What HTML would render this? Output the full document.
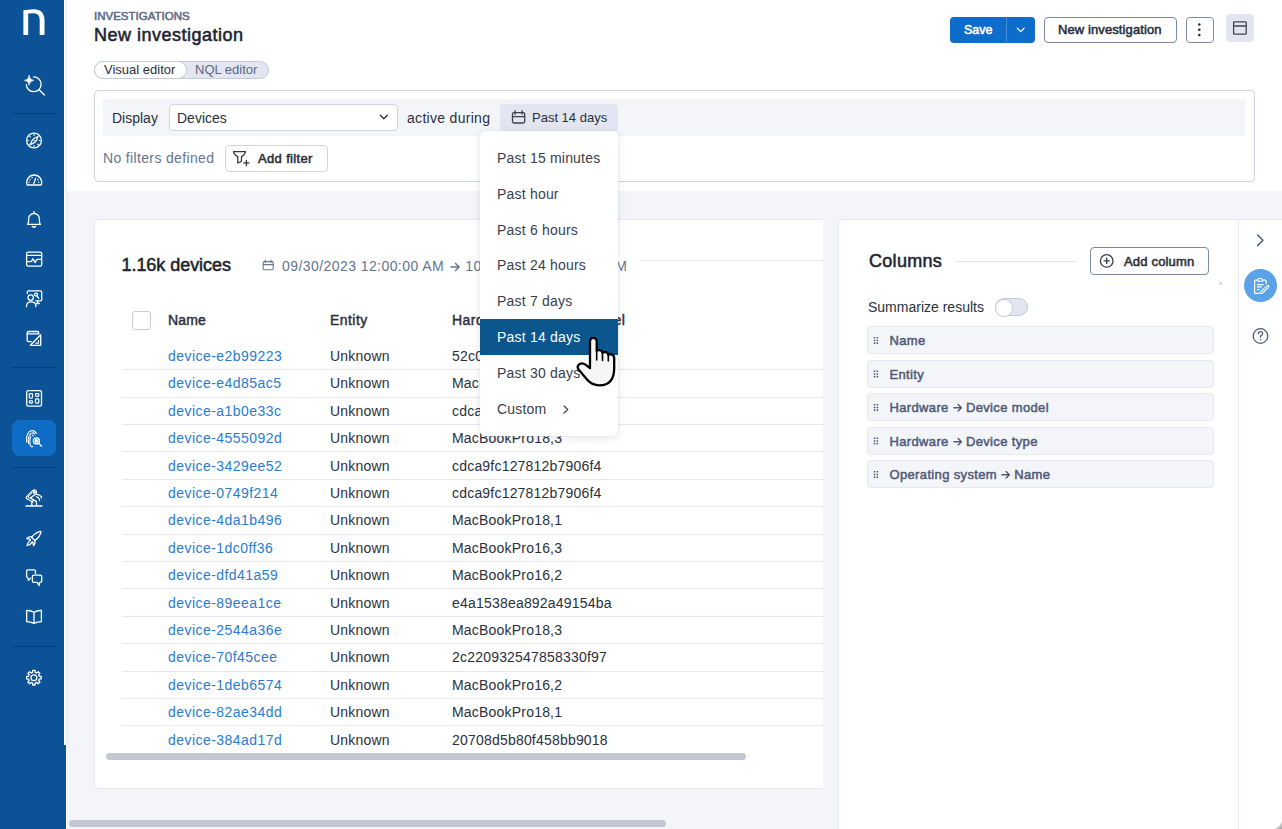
<!DOCTYPE html>
<html><head><meta charset="utf-8">
<style>
*{box-sizing:border-box;margin:0;padding:0}
html,body{width:1282px;height:829px;overflow:hidden;background:#fff;font-family:"Liberation Sans",sans-serif;color:#1f2633}
.a{position:absolute}
.t{position:absolute;line-height:1;white-space:nowrap}
#sb{left:0;top:0;width:64px;height:829px;background:#0b5297}
.sdiv{position:absolute;left:12px;width:44px;height:1px;background:#073f7c}
.ic{position:absolute;left:24px;width:20px;height:20px}
#gray{left:67px;top:191px;width:1215px;height:638px;background:#f4f5f9}
.btn{position:absolute;border:1px solid #7d8aa6;border-radius:4px;background:#fff}
.row{position:absolute;left:122px;width:701px;height:1px;background:#e6e8f1}
.lnk{color:#2b7bd0;letter-spacing:.45px}
.cell{color:#2b303b;letter-spacing:.2px}
.colitem{position:absolute;left:867px;width:347px;height:28px;background:#f4f5f9;border:1px solid #e5e8f0;border-radius:4px}
.colitem .t{left:21.5px;top:6.5px;font-size:13px;font-weight:400;-webkit-text-stroke:.5px currentColor;letter-spacing:.35px;color:#4f5b78}
.grip{position:absolute;left:6px;top:10px;width:5px;height:8px}
.arr{display:inline-block;width:.72em;height:.72em;vertical-align:-.06em;margin:0;stroke-width:1.5}
.dd{color:#3a404c;font-size:14px;letter-spacing:.2px}
</style></head>
<body>
<!-- sidebar -->
<div id="sb" class="a"></div>
<div class="sdiv" style="top:113px"></div><div class="sdiv" style="top:367px"></div><div class="sdiv" style="top:467px"></div><div class="sdiv" style="top:646px"></div>
<div class="a" style="left:12px;top:420px;width:44px;height:36px;background:#0f6cc5;border-radius:8px"></div>
<!--SBSVG-->
<svg class="a" style="left:0;top:0" width="64" height="829" viewBox="0 0 64 829" fill="none" stroke="#fff" stroke-width="1.3" stroke-linecap="round" stroke-linejoin="round">
<path d="M23.4 35.1V10.3L33.5 9.2Q39 9.2 41.8 12Q44.5 15 44.5 20.5V35.1H39.7V20Q39.7 13.2 33.8 13.2L28.2 13.5V35.1Z" fill="#fff" stroke="none"/>
<path d="M33.7 76.9A7.4 7.4 0 1 1 26.3 84.6"/><path d="M39.1 89.7L44.4 95"/>
<path d="M29.1 75.3Q29.5 79.7 33.9 80.3Q29.5 80.9 29.1 85.2Q28.7 80.9 24.4 80.3Q28.7 79.7 29.1 75.3Z" fill="#fff" stroke-width=".6"/>
<circle cx="34" cy="140.5" r="7.4"/>
<path d="M34 134.6v.8M34 145.6v.8M27.9 140.5h.8M39.3 140.5h.8M29.7 136.2l.6.6M37.7 144.2l.6.6M38.3 136.2l-.6.6M30.3 144.8l-.6-.6" stroke-width="1.1"/>
<path d="M30.7 144.3Q31.3 138.6 37.6 136.9Q37 142.6 30.7 144.3Z" stroke-width="1.2"/>
<circle cx="34.2" cy="140.6" r=".6" fill="#fff" stroke="none"/>
<path d="M27.2 185A7.45 7.45 0 1 1 41.2 185Z"/>
<circle cx="32.1" cy="177.7" r=".7" fill="#fff" stroke="none"/><circle cx="30.1" cy="179.7" r=".7" fill="#fff" stroke="none"/><circle cx="29" cy="182.3" r=".7" fill="#fff" stroke="none"/><circle cx="37.8" cy="179.7" r=".7" fill="#fff" stroke="none"/><circle cx="38.6" cy="182.3" r=".7" fill="#fff" stroke="none"/>
<path d="M33.6 184.2L35.6 178.2" stroke-width="1.2"/>
<path d="M27.6 224.4H40.4Q39.5 223.4 39.4 221V218.9A5.4 5.4 0 0 0 28.6 218.9V221Q28.5 223.4 27.6 224.4Z"/><path d="M34 211.6V213.4"/><path d="M32.3 226.3Q34 228.2 35.7 226.3"/>
<rect x="26.6" y="252.2" width="15.1" height="13.9" rx="1.6"/><path d="M26.6 255.3H41.7"/>
<path d="M26.8 261.6H30.5Q31.4 261.6 31.9 260.6L32.9 258.8L35.2 262.6L36.3 260.2Q36.7 259.4 37.6 259.4H41.5"/>
<path d="M27.3 293.4V292.3Q27.3 290.9 28.7 290.9H40.3Q41.7 290.9 41.7 292.3V299.4Q41.7 300.8 40.3 300.8H35.8"/><path d="M37.7 300.9V303.3M36.2 303.5H39.3"/>
<circle cx="30.7" cy="297.6" r="2.7"/><path d="M26.4 306.6Q26.6 301.9 31.2 301.9Q35.8 301.9 36 306.6"/>
<circle cx="36.1" cy="294.6" r="1.5"/><path d="M37 295.9L38.7 298.4"/>
<path d="M31.3 341.6H28.6Q27.2 341.6 27.2 340.2V332.9Q27.2 331.5 28.6 331.5H37.4Q38.8 331.5 38.8 332.9V333.8"/><path d="M27.2 333.9H38.4"/>
<path d="M30.4 345.3L40.7 334.8V345.3Z"/><path d="M35.8 343.1H38.5V340.2" stroke-width="1.1"/>
<rect x="26.7" y="390.7" width="14.8" height="15.4" rx="1.6"/>
<rect x="29.3" y="393.7" width="3.2" height="4.4" rx=".8" stroke-width="1.2"/><rect x="35.5" y="393.7" width="3.3" height="2.6" rx=".8" stroke-width="1.2"/><rect x="29.3" y="400.8" width="3.2" height="2.3" rx=".8" stroke-width="1.2"/><rect x="35.5" y="398.9" width="3.3" height="4.2" rx=".8" stroke-width="1.2"/>
<path d="M26.6 442Q26 433 30.5 431Q34.2 429.6 36.4 433.4" stroke-width="1.1"/>
<path d="M28.4 443.5Q27.8 436 31 433.3Q33.4 432.2 34.8 434.2" stroke-width="1.1" stroke-dasharray="3 1"/>
<path d="M30.3 445.5Q29.2 440 30.6 436.8M32.2 435.3Q33 435.1 33.2 436" stroke-width="1.1"/>
<path d="M30.9 446.3Q32 447 32.6 446.5" stroke-width="1.1"/>
<circle cx="36.4" cy="440.9" r="3"/><circle cx="36.4" cy="440.9" r="1.9" fill="#fff" stroke="none"/><path d="M38.6 443.1L41.5 446.2"/>
<path d="M26.1 506H41.9" stroke-width="1.5"/>
<path d="M31.8 505.6V502.8A2.35 2.35 0 0 1 36.5 502.8V505.6"/>
<path d="M32.9 502L27.3 499Q25.6 497.9 26.9 496.4L32.4 490.9Q34.3 489.1 36 490.7Q37.4 492.3 36 494L30.3 497.9L33.9 500"/>
<path d="M28.6 497.6L29.6 498.2M28.4 496.6L29.4 495.6M30.6 494.4L31.6 493.4" stroke-width="1"/>
<circle cx="34.2" cy="492.3" r="1"/>
<path d="M36.6 494.4Q39.6 494.6 41.3 496.7Q41.8 497.4 41.2 497.9M36.4 496.6Q38.6 497.4 39.6 499.6Q39.9 500.3 39.3 500.6" stroke-width="1.2"/>
<path d="M41 531.3Q36 531.8 31.6 537.2L34.9 540.6Q40.4 536.2 41 531.3Z"/>
<path d="M31.9 537Q28.2 536.2 26.8 538.5L30.3 539.4"/><path d="M34.7 540.4Q35.5 544 33.6 545.5L32.6 542"/>
<path d="M30.4 540.2Q27.6 542.3 27 545.6Q30.6 545 32.3 541.9"/>
<path d="M35.5 573.4V571.2Q35.5 569.8 34.1 569.8H28Q26.6 569.8 26.6 571.2V576.2Q26.6 577.6 27.8 577.7L28.4 580.3L30.5 578.3"/>
<path d="M33.8 575.2H40.3Q41.7 575.2 41.7 576.6V581Q41.7 582.4 40.3 582.4H39.6L39.2 585.5L37 582.4H33.8Q32.4 582.4 32.4 581V576.6Q32.4 575.2 33.8 575.2Z"/>
<path d="M34 612.2Q31 610.5 27.8 610.5H26.7V621.7Q30.7 621.7 34 623.4Q37.3 621.7 41.4 621.7V610.5H40.2Q37 610.5 34 612.2V623.2"/>
<path d="M32.57 672.36 L32.69 670.40 L35.11 670.40 L35.23 672.36 L36.74 672.99 L38.20 671.68 L39.92 673.40 L38.61 674.86 L39.24 676.37 L41.20 676.49 L41.20 678.91 L39.24 679.03 L38.61 680.54 L39.92 682.00 L38.20 683.72 L36.74 682.41 L35.23 683.04 L35.11 685.00 L32.69 685.00 L32.57 683.04 L31.06 682.41 L29.60 683.72 L27.88 682.00 L29.19 680.54 L28.56 679.03 L26.60 678.91 L26.60 676.49 L28.56 676.37 L29.19 674.86 L27.88 673.40 L29.60 671.68 L31.06 672.99Z"/>
<circle cx="33.9" cy="677.7" r="2.9"/>
</svg>
<!--/SBSVG-->
<div class="a" style="left:64px;top:745px;width:2px;height:84px;background:#0b5297"></div>
<div class="a" style="left:66px;top:0;width:1px;height:745px;background:#e3e8f0"></div>

<!-- gray content bg -->
<div id="gray" class="a"></div>

<!-- header -->
<div class="t" style="left:94px;top:11px;font-size:11.5px;font-weight:400;-webkit-text-stroke:.55px currentColor;color:#5f6b85">INVESTIGATIONS</div>
<div class="t" style="left:94px;top:26px;font-size:18px;font-weight:400;-webkit-text-stroke:.55px currentColor;letter-spacing:.5px;color:#1d2430">New investigation</div>

<!-- editor toggle -->
<div class="a" style="left:94px;top:61px;width:175px;height:18px;border:1px solid #c5cad8;border-radius:9px;background:#e3e6f1"></div>
<div class="a" style="left:94px;top:61px;width:93px;height:18px;border:1px solid #c5cad8;border-radius:9px;background:#fff"></div>
<div class="t" style="left:104px;top:63px;font-size:13px;color:#2b303b">Visual editor</div>
<div class="t" style="left:195px;top:63px;font-size:13px;color:#5b6782">NQL editor</div>

<!-- buttons top right -->
<div class="a" style="left:950px;top:17px;width:85px;height:26px;background:#0e6cca;border-radius:4px"></div>
<div class="a" style="left:1006px;top:17px;width:1px;height:26px;background:#4a8fd6"></div>
<div class="t" style="left:964px;top:23.5px;font-size:12.5px;font-weight:400;-webkit-text-stroke:.55px currentColor;color:#fff">Save</div>
<div class="btn" style="left:1044px;top:17px;width:133px;height:26px"></div>
<div class="t" style="left:1058px;top:23px;font-size:13px;font-weight:400;-webkit-text-stroke:.55px currentColor;letter-spacing:.1px;color:#2b303b">New investigation</div>
<div class="btn" style="left:1186px;top:17px;width:28px;height:26px"></div>
<div class="a" style="left:1226px;top:14px;width:28px;height:28px;background:#e3e6f1;border-radius:4px"></div>

<!-- query box -->
<div class="a" style="left:94px;top:90px;width:1161px;height:92px;border:1px solid #cfd4e0;border-radius:4px"></div>
<div class="a" style="left:103px;top:99px;width:1142px;height:37px;background:#f4f5f9"></div>
<div class="t" style="left:112px;top:111px;font-size:14px;color:#2b303b">Display</div>
<div class="a" style="left:169px;top:104px;width:229px;height:27px;background:#fff;border:1px solid #cfd4e0;border-radius:4px"></div>
<div class="t" style="left:177px;top:111px;font-size:14px;color:#2b303b">Devices</div>
<div class="t" style="left:407px;top:111px;font-size:14px;letter-spacing:.3px;color:#2b303b">active during</div>
<div class="a" style="left:500px;top:104px;width:118px;height:27px;background:#e3e6f1;border-radius:4px"></div>
<div class="t" style="left:532px;top:111px;font-size:13px;color:#2b303b">Past 14 days</div>
<div class="t" style="left:103px;top:151px;font-size:14px;letter-spacing:.35px;color:#66748f">No filters defined</div>
<div class="btn" style="left:225px;top:145px;width:103px;height:27px;border-color:#cfd4e0"></div>
<div class="t" style="left:258px;top:152px;font-size:13px;font-weight:400;-webkit-text-stroke:.55px currentColor;letter-spacing:.35px;color:#2b303b">Add filter</div>

<!-- table card -->
<div class="a" style="left:94px;top:219px;width:740px;height:570px;background:#fff;border:1px solid #e7e9f2;border-radius:5px"></div>
<div class="a" style="left:823px;top:219px;width:15px;height:610px;background:#f4f5f9"></div>
<div class="t" style="left:121.5px;top:256px;font-size:18px;font-weight:400;-webkit-text-stroke:.55px currentColor;letter-spacing:-.05px;color:#1d2430">1.16k devices</div>
<div class="t" style="left:282px;top:259px;font-size:14px;letter-spacing:.43px;color:#66748f">09/30/2023 12:00:00 AM <svg class="arr" style="margin:0 .5px 0 2px" viewBox="0 0 10 10" fill="none" stroke="currentColor" stroke-linecap="round" stroke-linejoin="round"><path d="M1 5H9M5.5 1.5L9 5L5.5 8.5"/></svg> 10/14/2023 12:00:00 AM</div>
<div class="a" style="left:639px;top:260px;width:184px;height:1px;background:#e6e8f1"></div>

<div class="a" style="left:132px;top:311px;width:19px;height:19px;border:1px solid #c7ccd8;border-radius:3px;background:#fff"></div>
<div class="t" style="left:168px;top:313px;font-size:14px;font-weight:400;-webkit-text-stroke:.45px currentColor;letter-spacing:.15px;color:#2b303b">Name</div>
<div class="t" style="left:330px;top:313px;font-size:14px;font-weight:400;-webkit-text-stroke:.45px currentColor;letter-spacing:.45px;color:#2b303b">Entity</div>
<div class="t" style="left:452px;top:313px;font-size:14px;font-weight:400;-webkit-text-stroke:.45px currentColor;letter-spacing:.45px;color:#2b303b">Hardware <svg class="arr" viewBox="0 0 10 10" fill="none" stroke="currentColor" stroke-linecap="round" stroke-linejoin="round"><path d="M1 5H9M5.5 1.5L9 5L5.5 8.5"/></svg> Device model</div>
<!--ROWS-->
<div class="t lnk" style="left:168px;top:348.95px;font-size:14px">device-e2b99223</div>
<div class="t cell" style="left:330px;top:348.95px;font-size:14px">Unknown</div>
<div class="t cell" style="left:452px;top:348.95px;font-size:14px">52c0e1f7a3b94d2c8e51</div>
<div class="row" style="top:369.2px"></div>
<div class="t lnk" style="left:168px;top:376.35px;font-size:14px">device-e4d85ac5</div>
<div class="t cell" style="left:330px;top:376.35px;font-size:14px">Unknown</div>
<div class="t cell" style="left:452px;top:376.35px;font-size:14px">MacBookPro18,3</div>
<div class="row" style="top:396.6px"></div>
<div class="t lnk" style="left:168px;top:403.75px;font-size:14px">device-a1b0e33c</div>
<div class="t cell" style="left:330px;top:403.75px;font-size:14px">Unknown</div>
<div class="t cell" style="left:452px;top:403.75px;font-size:14px">cdca9fc127812b7906f4</div>
<div class="row" style="top:424.0px"></div>
<div class="t lnk" style="left:168px;top:431.15px;font-size:14px">device-4555092d</div>
<div class="t cell" style="left:330px;top:431.15px;font-size:14px">Unknown</div>
<div class="t cell" style="left:452px;top:431.15px;font-size:14px">MacBookPro18,3</div>
<div class="row" style="top:451.4px"></div>
<div class="t lnk" style="left:168px;top:458.55px;font-size:14px">device-3429ee52</div>
<div class="t cell" style="left:330px;top:458.55px;font-size:14px">Unknown</div>
<div class="t cell" style="left:452px;top:458.55px;font-size:14px">cdca9fc127812b7906f4</div>
<div class="row" style="top:478.8px"></div>
<div class="t lnk" style="left:168px;top:485.95px;font-size:14px">device-0749f214</div>
<div class="t cell" style="left:330px;top:485.95px;font-size:14px">Unknown</div>
<div class="t cell" style="left:452px;top:485.95px;font-size:14px">cdca9fc127812b7906f4</div>
<div class="row" style="top:506.2px"></div>
<div class="t lnk" style="left:168px;top:513.35px;font-size:14px">device-4da1b496</div>
<div class="t cell" style="left:330px;top:513.35px;font-size:14px">Unknown</div>
<div class="t cell" style="left:452px;top:513.35px;font-size:14px">MacBookPro18,1</div>
<div class="row" style="top:533.6px"></div>
<div class="t lnk" style="left:168px;top:540.75px;font-size:14px">device-1dc0ff36</div>
<div class="t cell" style="left:330px;top:540.75px;font-size:14px">Unknown</div>
<div class="t cell" style="left:452px;top:540.75px;font-size:14px">MacBookPro16,3</div>
<div class="row" style="top:561.0px"></div>
<div class="t lnk" style="left:168px;top:568.15px;font-size:14px">device-dfd41a59</div>
<div class="t cell" style="left:330px;top:568.15px;font-size:14px">Unknown</div>
<div class="t cell" style="left:452px;top:568.15px;font-size:14px">MacBookPro16,2</div>
<div class="row" style="top:588.4px"></div>
<div class="t lnk" style="left:168px;top:595.55px;font-size:14px">device-89eea1ce</div>
<div class="t cell" style="left:330px;top:595.55px;font-size:14px">Unknown</div>
<div class="t cell" style="left:452px;top:595.55px;font-size:14px">e4a1538ea892a49154ba</div>
<div class="row" style="top:615.8px"></div>
<div class="t lnk" style="left:168px;top:622.95px;font-size:14px">device-2544a36e</div>
<div class="t cell" style="left:330px;top:622.95px;font-size:14px">Unknown</div>
<div class="t cell" style="left:452px;top:622.95px;font-size:14px">MacBookPro18,3</div>
<div class="row" style="top:643.2px"></div>
<div class="t lnk" style="left:168px;top:650.35px;font-size:14px">device-70f45cee</div>
<div class="t cell" style="left:330px;top:650.35px;font-size:14px">Unknown</div>
<div class="t cell" style="left:452px;top:650.35px;font-size:14px">2c220932547858330f97</div>
<div class="row" style="top:670.6px"></div>
<div class="t lnk" style="left:168px;top:677.75px;font-size:14px">device-1deb6574</div>
<div class="t cell" style="left:330px;top:677.75px;font-size:14px">Unknown</div>
<div class="t cell" style="left:452px;top:677.75px;font-size:14px">MacBookPro16,2</div>
<div class="row" style="top:698.0px"></div>
<div class="t lnk" style="left:168px;top:705.15px;font-size:14px">device-82ae34dd</div>
<div class="t cell" style="left:330px;top:705.15px;font-size:14px">Unknown</div>
<div class="t cell" style="left:452px;top:705.15px;font-size:14px">MacBookPro18,1</div>
<div class="row" style="top:725.4px"></div>
<div class="t lnk" style="left:168px;top:732.55px;font-size:14px">device-384ad17d</div>
<div class="t cell" style="left:330px;top:732.55px;font-size:14px">Unknown</div>
<div class="t cell" style="left:452px;top:732.55px;font-size:14px">20708d5b80f458bb9018</div>
<!--/ROWS-->
<div class="a" style="left:106px;top:753px;width:640px;height:7px;background:#c3c7d1;border-radius:4px"></div>
<div class="a" style="left:69px;top:820px;width:597px;height:7px;background:#c3c7d1;border-radius:4px"></div>

<!-- columns panel -->
<div class="a" style="left:838px;top:219px;width:460px;height:620px;background:#fff;border:1px solid #e7e9f2;border-radius:5px"></div>
<div class="a" style="left:1238px;top:219px;width:44px;height:610px;background:#fff;border-left:1px solid #e7e9f2;border-top:1px solid #e7e9f2"></div>
<div class="t" style="left:869px;top:252px;font-size:18px;font-weight:400;-webkit-text-stroke:.55px currentColor;letter-spacing:.3px;color:#1d2430">Columns</div>
<div class="a" style="left:956px;top:261px;width:120px;height:1px;background:#e1e4ee"></div>
<div class="btn" style="left:1090px;top:247px;width:119px;height:28px"></div>
<div class="t" style="left:1124px;top:255px;font-size:13px;font-weight:400;-webkit-text-stroke:.55px currentColor;letter-spacing:.18px;color:#2b303b">Add column</div>
<div class="t" style="left:868px;top:300px;font-size:14px;color:#2b303b">Summarize results</div>
<div class="a" style="left:995px;top:298px;width:32.5px;height:18px;background:#e3e6f1;border:1px solid #c5cad8;border-radius:9px"></div>
<div class="a" style="left:995.3px;top:299.3px;width:17.3px;height:17.3px;background:#fff;border:1px solid #c5cad8;border-radius:50%"></div>

<div class="colitem" style="top:326px"><div class="t">Name</div></div>
<div class="colitem" style="top:360px"><div class="t">Entity</div></div>
<div class="colitem" style="top:393px"><div class="t">Hardware <svg class="arr" viewBox="0 0 10 10" fill="none" stroke="currentColor" stroke-linecap="round" stroke-linejoin="round"><path d="M1 5H9M5.5 1.5L9 5L5.5 8.5"/></svg> Device model</div></div>
<div class="colitem" style="top:427px"><div class="t">Hardware <svg class="arr" viewBox="0 0 10 10" fill="none" stroke="currentColor" stroke-linecap="round" stroke-linejoin="round"><path d="M1 5H9M5.5 1.5L9 5L5.5 8.5"/></svg> Device type</div></div>
<div class="colitem" style="top:460px"><div class="t">Operating system <svg class="arr" viewBox="0 0 10 10" fill="none" stroke="currentColor" stroke-linecap="round" stroke-linejoin="round"><path d="M1 5H9M5.5 1.5L9 5L5.5 8.5"/></svg> Name</div></div>

<div class="a" style="left:1244px;top:269px;width:33px;height:33px;background:#5aa2e8;border-radius:50%"></div>


<!--ICONS-->
<svg class="a" style="left:0;top:0;pointer-events:none" width="1282" height="829" viewBox="0 0 1282 829" fill="none" stroke-linecap="round" stroke-linejoin="round">
<path d="M1017.3 28.2L1020.7 31.6L1024.1 28.2" stroke="#fff" stroke-width="1.3"/>
<circle cx="1199.3" cy="24.5" r="1.25" fill="#1f2633"/><circle cx="1199.3" cy="29.8" r="1.25" fill="#1f2633"/><circle cx="1199.3" cy="35" r="1.25" fill="#1f2633"/>
<rect x="1233.6" y="21.8" width="12.6" height="12.4" rx=".8" stroke="#3e4450" stroke-width="1.3"/><path d="M1233.6 26H1246.2" stroke="#3e4450" stroke-width="1.3"/>
<path d="M380.3 115.3L383.8 118.8L387.3 115.3" stroke="#2b303b" stroke-width="1.3"/>
<rect x="512.5" y="112.6" width="12.2" height="10.4" rx="1.5" stroke="#3a404c" stroke-width="1.3"/><path d="M512.5 116.6H524.7M515.1 110.6V114.2M522.1 110.6V114.2" stroke="#3a404c" stroke-width="1.3"/>
<path d="M233.6 151.6H245.4Q245.4 154.5 241.5 156.7V160.3Q241.5 161.5 240.3 162L237.8 163V156.7Q233.6 154.5 233.6 151.6Z" stroke="#2f3542" stroke-width="1.3"/><path d="M246.4 160.3V165.5M243.8 162.9H249" stroke="#2f3542" stroke-width="1.3"/>
<rect x="263.2" y="261.6" width="10" height="8.2" rx="1.2" stroke="#6b7893" stroke-width="1.1"/><path d="M263.2 264.6H273.2M265.4 260V262.6M271 260V262.6" stroke="#6b7893" stroke-width="1.1"/>
<circle cx="1106.7" cy="260.9" r="6.3" stroke="#3a404c" stroke-width="1.3"/><path d="M1106.7 258.3V263.5M1104.1 260.9H1109.3" stroke="#3a404c" stroke-width="1.4"/>
<path d="M1218.5 284.5L1221.5 281.5V284.5Z" fill="#b8bfcf"/>
<path d="M1257.6 235L1263 240.3L1257.6 245.6" stroke="#4f5b78" stroke-width="1.5"/>
<circle cx="1260.5" cy="285.6" r="15.8" fill="#5ba3e8"/>
<path d="M1258 280.1H1255.6Q1254.6 280.1 1254.6 281.1V292.5Q1254.6 293.4 1255.6 293.4H1259.2M1262.5 280.1H1265Q1266.2 280.1 1266.2 281.3V283.5" stroke="#fff" stroke-width="1.2"/>
<path d="M1258 281.2V280.2Q1258 278.3 1260.2 278.3Q1262.5 278.3 1262.5 280.2V281.2Z" stroke="#fff" stroke-width="1.1"/>
<path d="M1257.4 284.6H1263.2M1257.4 286.9H1261.3M1257.4 289.6H1259.2" stroke="#fff" stroke-width="1.2"/>
<path d="M1267.2 285.6Q1268.6 285.1 1269 286.6L1262.6 293L1260.6 293.4L1261 291.4Z" stroke="#fff" stroke-width="1.1"/>
<circle cx="1260.5" cy="336" r="7.3" stroke="#4f5b78" stroke-width="1.3"/>
<path d="M1258.3 333.8Q1258.3 331.6 1260.5 331.6Q1262.7 331.6 1262.7 333.6Q1262.7 335 1260.5 336V337.3" stroke="#4f5b78" stroke-width="1.3"/><circle cx="1260.5" cy="339.8" r=".8" fill="#4f5b78"/>
<rect x="873.70" y="336.90" width="1.6" height="1.6" rx=".4" fill="#4a5673"/><rect x="873.70" y="339.65" width="1.6" height="1.6" rx=".4" fill="#4a5673"/><rect x="873.70" y="342.30" width="1.6" height="1.6" rx=".4" fill="#4a5673"/><rect x="876.50" y="336.90" width="1.6" height="1.6" rx=".4" fill="#4a5673"/><rect x="876.50" y="339.65" width="1.6" height="1.6" rx=".4" fill="#4a5673"/><rect x="876.50" y="342.30" width="1.6" height="1.6" rx=".4" fill="#4a5673"/><rect x="873.70" y="370.40" width="1.6" height="1.6" rx=".4" fill="#4a5673"/><rect x="873.70" y="373.15" width="1.6" height="1.6" rx=".4" fill="#4a5673"/><rect x="873.70" y="375.80" width="1.6" height="1.6" rx=".4" fill="#4a5673"/><rect x="876.50" y="370.40" width="1.6" height="1.6" rx=".4" fill="#4a5673"/><rect x="876.50" y="373.15" width="1.6" height="1.6" rx=".4" fill="#4a5673"/><rect x="876.50" y="375.80" width="1.6" height="1.6" rx=".4" fill="#4a5673"/><rect x="873.70" y="403.90" width="1.6" height="1.6" rx=".4" fill="#4a5673"/><rect x="873.70" y="406.65" width="1.6" height="1.6" rx=".4" fill="#4a5673"/><rect x="873.70" y="409.30" width="1.6" height="1.6" rx=".4" fill="#4a5673"/><rect x="876.50" y="403.90" width="1.6" height="1.6" rx=".4" fill="#4a5673"/><rect x="876.50" y="406.65" width="1.6" height="1.6" rx=".4" fill="#4a5673"/><rect x="876.50" y="409.30" width="1.6" height="1.6" rx=".4" fill="#4a5673"/><rect x="873.70" y="437.40" width="1.6" height="1.6" rx=".4" fill="#4a5673"/><rect x="873.70" y="440.15" width="1.6" height="1.6" rx=".4" fill="#4a5673"/><rect x="873.70" y="442.80" width="1.6" height="1.6" rx=".4" fill="#4a5673"/><rect x="876.50" y="437.40" width="1.6" height="1.6" rx=".4" fill="#4a5673"/><rect x="876.50" y="440.15" width="1.6" height="1.6" rx=".4" fill="#4a5673"/><rect x="876.50" y="442.80" width="1.6" height="1.6" rx=".4" fill="#4a5673"/><rect x="873.70" y="470.90" width="1.6" height="1.6" rx=".4" fill="#4a5673"/><rect x="873.70" y="473.65" width="1.6" height="1.6" rx=".4" fill="#4a5673"/><rect x="873.70" y="476.30" width="1.6" height="1.6" rx=".4" fill="#4a5673"/><rect x="876.50" y="470.90" width="1.6" height="1.6" rx=".4" fill="#4a5673"/><rect x="876.50" y="473.65" width="1.6" height="1.6" rx=".4" fill="#4a5673"/><rect x="876.50" y="476.30" width="1.6" height="1.6" rx=".4" fill="#4a5673"/>
</svg>
<!--/ICONS-->

<!-- dropdown -->
<div id="dd" class="a" style="left:480px;top:131px;width:138px;height:305px;background:#fff;border-radius:5px;box-shadow:0 2px 8px rgba(30,40,70,.12),0 0 1px rgba(30,40,70,.15)"></div>
<div class="a" style="left:480px;top:319px;width:138px;height:36px;background:#0a568d"></div>
<div class="t dd" style="left:497px;top:151px">Past 15 minutes</div>
<div class="t dd" style="left:497px;top:187px">Past hour</div>
<div class="t dd" style="left:497px;top:223px">Past 6 hours</div>
<div class="t dd" style="left:497px;top:258px">Past 24 hours</div>
<div class="t dd" style="left:497px;top:294px">Past 7 days</div>
<div class="t dd" style="left:497px;top:330px;color:#fff">Past 14 days</div>
<div class="t dd" style="left:497px;top:366px">Past 30 days</div>
<div class="t dd" style="left:497px;top:402px">Custom</div>

<svg class="a" style="left:0;top:0" width="1282" height="829" fill="none"><path d="M564 406L567.8 409.5L564 413" stroke="#3a404c" stroke-width="1.2" stroke-linecap="round" stroke-linejoin="round"/></svg>
<svg class="a" style="left:1262px;top:809px" width="20" height="20" viewBox="0 0 20 20"><defs><radialGradient id="cg" cx="10" cy="10" r="14.14" gradientUnits="userSpaceOnUse"><stop offset=".66" stop-color="#fff"/><stop offset=".74" stop-color="#c8c8c8"/><stop offset="1" stop-color="#9a9a9a"/></radialGradient></defs><path d="M9 20A11 11 0 0 0 20 9V20Z" fill="url(#cg)"/></svg>
<!--HAND-->
<svg class="a" style="left:570px;top:330px" width="52" height="62" viewBox="-7 -8 52 62" fill="none" stroke-linejoin="round" stroke-linecap="round">
<path d="M13 24.5V3.3A3.35 3.35 0 0 1 19.7 3.3V13Q19.7 12 22.6 12.2Q25.5 12.5 25.5 15Q25.5 13.9 28.4 14.2Q31.3 14.6 31.3 17Q31.3 16 34 16.3Q37.2 16.8 37.2 20V30Q37.2 47.3 22.5 47.3Q15 47.3 10 41.5L1.8 31.8Q-0.6 28.6 2.2 26.3Q5 24.2 8.5 26.6L13 30Z" fill="#f6f6f6" stroke="#000" stroke-width="2.3"/>
<path d="M19.7 13V22M25.5 15V22.5M31.3 17V23" stroke="#000" stroke-width="1.6"/>
</svg>
<!--/HAND-->
</body></html>
